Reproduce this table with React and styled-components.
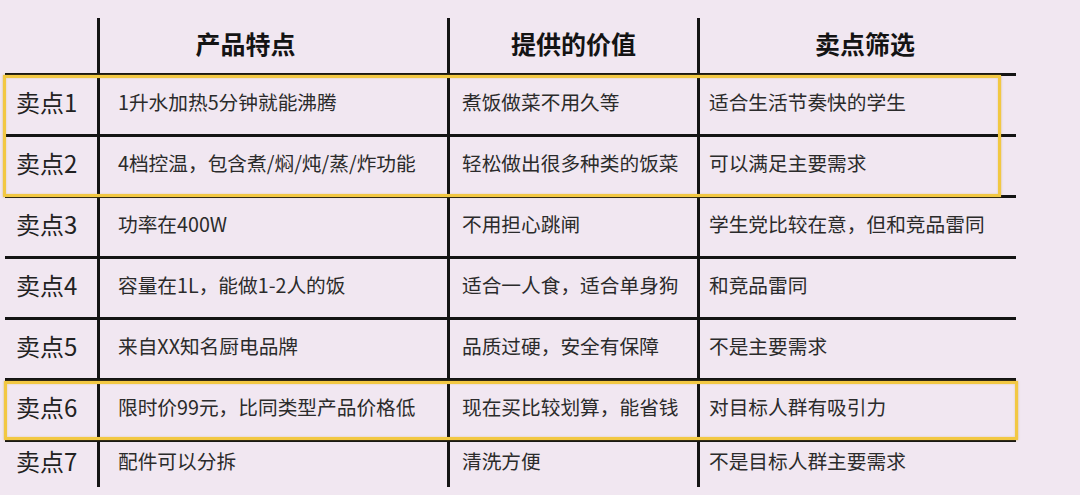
import React from 'react';
import styled, { createGlobalStyle } from 'styled-components';

const GlobalStyle = createGlobalStyle`
  html, body {
    margin: 0;
    padding: 0;
    background: #f1e7f1;
    font-family: "Noto Sans CJK SC", "Noto Sans", sans-serif;
  }
`;

const Page = styled.div`
  width: 1080px;
  height: 495px;
  overflow: hidden;
  background: #f1e7f1;
  padding-left: 5px;
  box-sizing: border-box;
`;

const Table = styled.div`
  width: 1011px;
`;

const Row = styled.div`
  display: grid;
  grid-template-columns: 92px 350px 250px 319px;
  height: ${p => p.$height}px;
  box-sizing: border-box;
  border-top: ${p => (p.$header ? 'none' : '3px solid #141414')};
`;

const HeadCell = styled.div`
  margin-top: 18px;
  border-left: ${p => (p.$first ? 'none' : '3px solid #141414')};
  display: flex;
  align-items: center;
  justify-content: center;
  padding: 0 ${p => p.$pr || 0}px 6px ${p => p.$pl || 0}px;
  font-size: 25px;
  font-weight: 700;
  color: #141414;
`;

const Label = styled.div`
  display: flex;
  align-items: center;
  padding: 0 0 8px 11px;
  font-size: 24px;
  color: #222;
`;

const Cell = styled.div`
  border-left: 3px solid #141414;
  display: flex;
  align-items: center;
  padding: 0 0 8px ${p => p.$pl}px;
  font-size: 19.7px;
  color: #2b2b2b;
  white-space: nowrap;
`;

const Group = styled.div`
  position: relative;
`;

const Highlight = styled.div`
  position: absolute;
  top: ${p => p.$top}px;
  bottom: ${p => p.$bottom}px;
  left: ${p => p.$left}px;
  right: ${p => p.$right}px;
  border: 3px solid #f2c843;
  box-shadow: 0 0 2px rgba(190, 150, 20, 0.55), inset 0 0 2px rgba(190, 150, 20, 0.35);
  pointer-events: none;
`;

const points = [
  ['卖点1', '1升水加热5分钟就能沸腾', '煮饭做菜不用久等', '适合生活节奏快的学生'],
  ['卖点2', '4档控温，包含煮/焖/炖/蒸/炸功能', '轻松做出很多种类的饭菜', '可以满足主要需求'],
  ['卖点3', '功率在400W', '不用担心跳闸', '学生党比较在意，但和竞品雷同'],
  ['卖点4', '容量在1L，能做1-2人的饭', '适合一人食，适合单身狗', '和竞品雷同'],
  ['卖点5', '来自XX知名厨电品牌', '品质过硬，安全有保障', '不是主要需求'],
  ['卖点6', '限时价99元，比同类型产品价格低', '现在买比较划算，能省钱', '对目标人群有吸引力'],
  ['卖点7', '配件可以分拆', '清洗方便', '不是目标人群主要需求'],
];

const PointRow = ({ item, height = 61 }) => (
  <Row $height={height}>
    <Label>{item[0]}</Label>
    <Cell $pl={18}>{item[1]}</Cell>
    <Cell $pl={12}>{item[2]}</Cell>
    <Cell $pl={9}>{item[3]}</Cell>
  </Row>
);

const App = () => (
  <Page>
    <GlobalStyle />
    <Table>
      <Row $header $height={73}>
        <HeadCell $first />
        <HeadCell $pr={56}>产品特点</HeadCell>
        <HeadCell>提供的价值</HeadCell>
        <HeadCell $pl={14}>卖点筛选</HeadCell>
      </Row>
      <Group>
        <PointRow item={points[0]} />
        <PointRow item={points[1]} />
        <Highlight $top={2} $bottom={-2} $left={-2} $right={15} />
      </Group>
      <PointRow item={points[2]} />
      <PointRow item={points[3]} />
      <PointRow item={points[4]} />
      <Group>
        <PointRow item={points[5]} />
        <Highlight $top={3} $bottom={-1} $left={-1} $right={-2} />
      </Group>
      <PointRow item={points[6]} height={48} />
    </Table>
  </Page>
);

export default App;
